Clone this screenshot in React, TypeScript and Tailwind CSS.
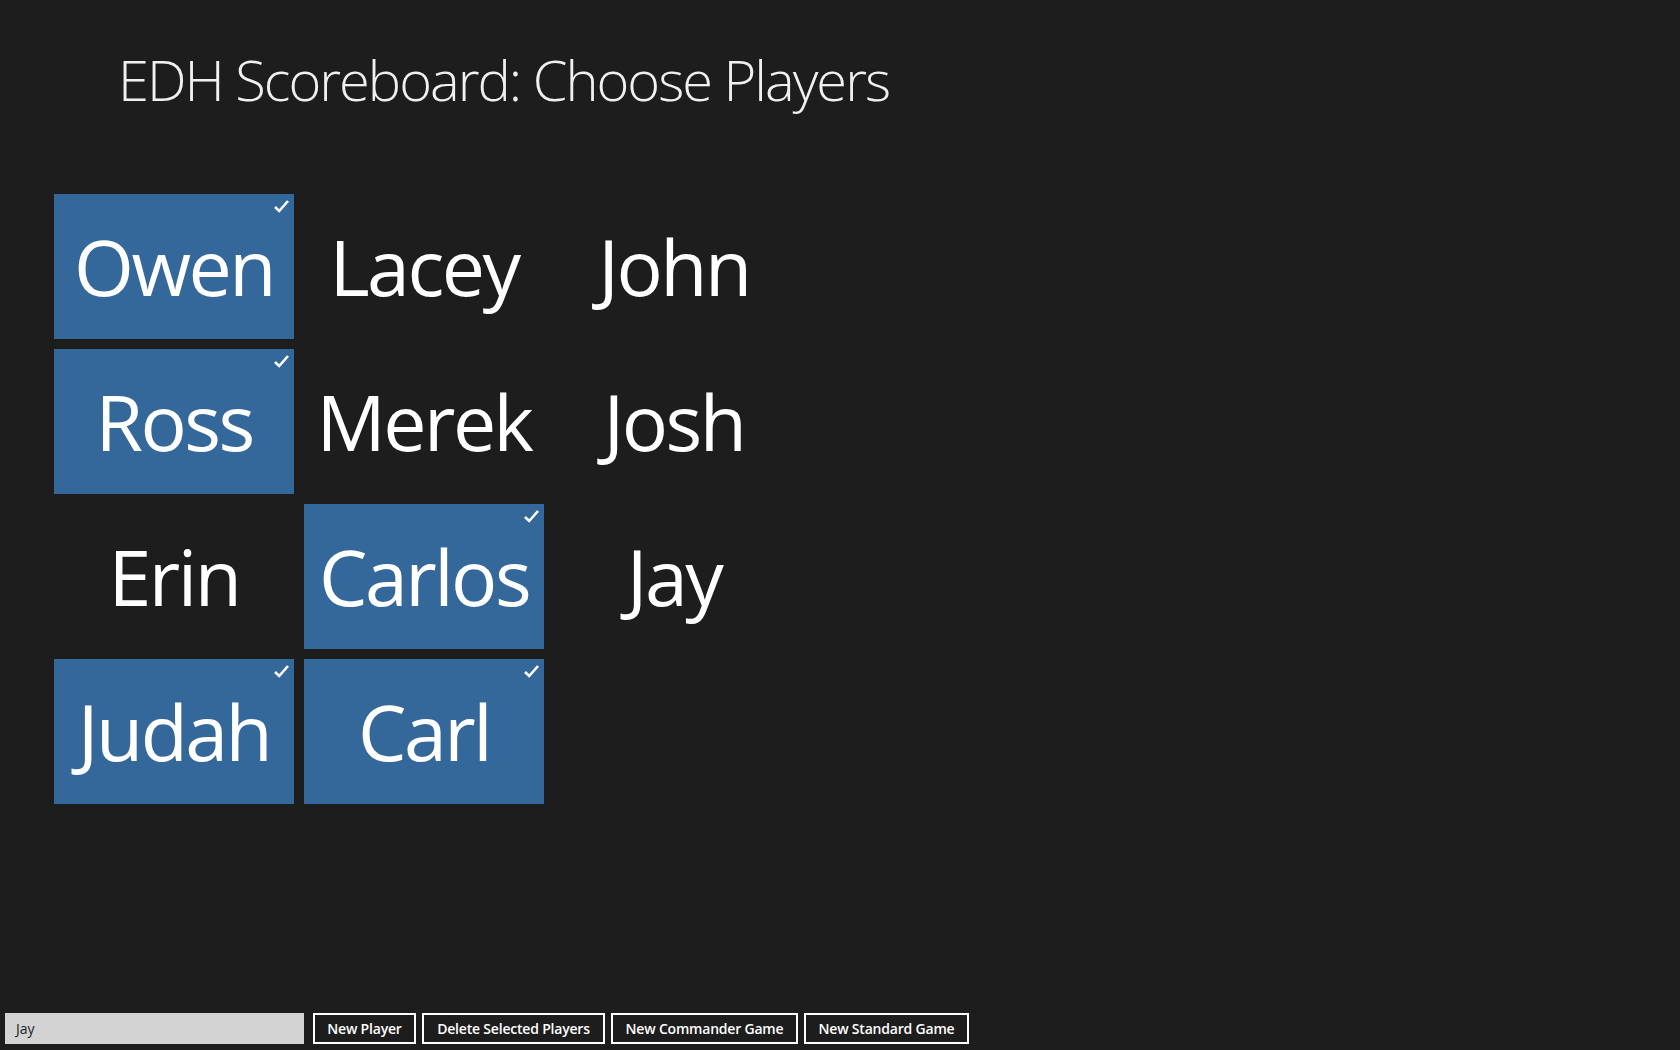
import React from "react";

type Player = { name: string; selected: boolean };

const players: Player[] = [
  { name: "Owen", selected: true },
  { name: "Ross", selected: true },
  { name: "Erin", selected: false },
  { name: "Judah", selected: true },
  { name: "Lacey", selected: false },
  { name: "Merek", selected: false },
  { name: "Carlos", selected: true },
  { name: "Carl", selected: true },
  { name: "John", selected: false },
  { name: "Josh", selected: false },
  { name: "Jay", selected: false },
];

function Check() {
  return (
    <svg
      className="absolute right-[4px] top-[5px]"
      width="17"
      height="14"
      viewBox="0 0 17 14"
      fill="none"
    >
      <path d="M2 8 L6.2 12 L15 2" stroke="white" strokeWidth="2.6" />
    </svg>
  );
}

function Tile({ p }: { p: Player }) {
  return (
    <div
      className={
        p.selected
          ? "relative flex h-[145px] w-[240px] items-center justify-center bg-[#35689a] text-white"
          : "relative flex h-[145px] w-[240px] items-center justify-center text-white"
      }
    >
      <span className="text-[77px] leading-none tracking-[-2.5px]">{p.name}</span>
      {p.selected && <Check />}
    </div>
  );
}

const buttons: { label: string; w: string }[] = [
  { label: "New Player", w: "w-[103px]" },
  { label: "Delete Selected Players", w: "w-[183px]" },
  { label: "New Commander Game", w: "w-[187px]" },
  { label: "New Standard Game", w: "w-[165px]" },
];

export default function App() {
  return (
    <div
      className="flex h-[1050px] w-[1680px] flex-col overflow-hidden bg-[#1d1d1d] text-white"
      style={{ fontFamily: '"Open Sans", "Noto Sans", sans-serif' }}
    >
      <div className="pl-[118px] pt-[51px]">
        <h1 className="text-[56px] font-light leading-none text-[#f0f0f0] tracking-[-2px]">
          EDH Scoreboard: Choose Players
        </h1>
      </div>

      <div className="ml-[54px] mt-[87px] grid grid-flow-col grid-rows-4 gap-[10px] self-start">
        {players.map((p) => (
          <Tile key={p.name} p={p} />
        ))}
      </div>

      <div className="flex-1" />

      <div className="flex items-center gap-[6px] pb-[6px] pl-[5px]">
        <div className="mr-[3px] flex h-[31px] w-[299px] items-center bg-[#d3d3d3] pl-[11px] text-[14px] text-[#222]">
          Jay
        </div>
        {buttons.map((b) => (
          <div
            key={b.label}
            className={`flex h-[31px] ${b.w} items-center justify-center border-2 border-white text-[14px] font-semibold tracking-[-0.2px] text-white`}
          >
            {b.label}
          </div>
        ))}
      </div>
    </div>
  );
}
